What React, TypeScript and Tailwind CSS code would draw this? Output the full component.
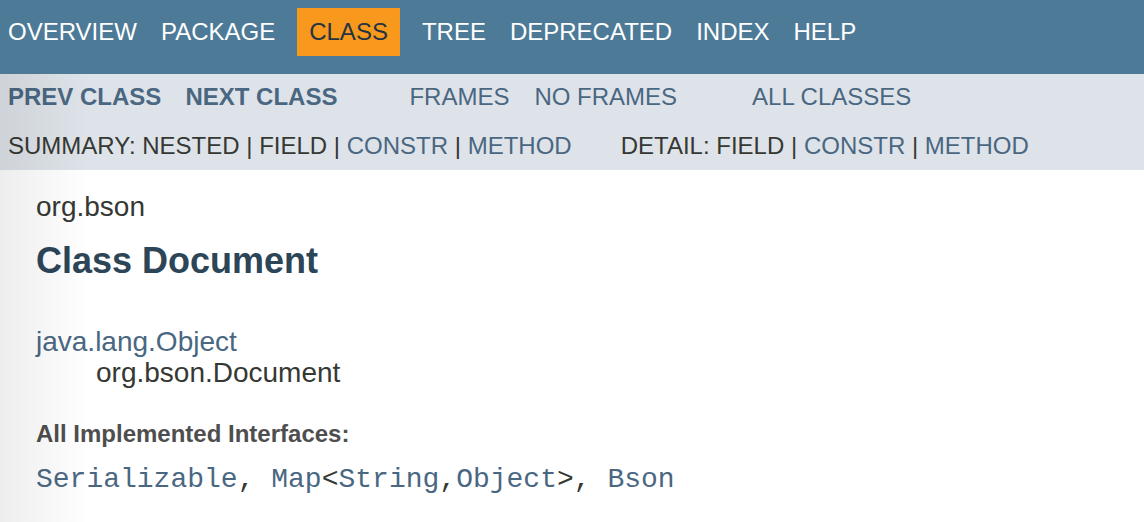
import React from "react";

const topLinks = ["OVERVIEW", "PACKAGE", "CLASS", "TREE", "DEPRECATED", "INDEX", "HELP"];

function Sep() {
  return <span className="text-[#353833]"> | </span>;
}

export default function App() {
  return (
    <div className="relative min-h-[522px] w-full bg-white font-['Liberation_Sans',Arial,sans-serif] text-[#353833]">
      {/* top nav */}
      <div className="flex h-[74px] items-start gap-[24px] bg-[#4d7a97] pl-[8px] pt-2 text-[24px] leading-[48px] text-white">
        {topLinks.map((l) =>
          l === "CLASS" ? (
            <span key={l} className="-mx-[2px] h-12 bg-[#f8981d] px-3 text-[#253441]">
              {l}
            </span>
          ) : (
            <span key={l} className="h-12">
              {l}
            </span>
          )
        )}
      </div>

      {/* sub nav */}
      <div className="bg-[#dee3e9] pb-[10px] pl-[8px] pt-[9px] text-[24px] leading-[28px]">
        <div className="flex text-[#4a6782]">
          <div className="flex gap-6 font-bold">
            <span>PREV CLASS</span>
            <span>NEXT CLASS</span>
          </div>
          <div className="ml-[72px] flex gap-[25px]">
            <span>FRAMES</span>
            <span>NO FRAMES</span>
          </div>
          <div className="ml-[75px]">ALL CLASSES</div>
        </div>
        <div className="mt-[21px] flex whitespace-pre">
          <div>
            <span>SUMMARY: NESTED</span>
            <Sep />
            <span>FIELD</span>
            <Sep />
            <span className="text-[#4a6782]">CONSTR</span>
            <Sep />
            <span className="text-[#4a6782]">METHOD</span>
          </div>
          <div className="ml-[49px]">
            <span>DETAIL: FIELD</span>
            <Sep />
            <span className="text-[#4a6782]">CONSTR</span>
            <Sep />
            <span className="text-[#4a6782]">METHOD</span>
          </div>
        </div>
      </div>

      {/* content */}
      <div className="pl-[36px] pt-[21px]">
        <div className="text-[28px] leading-[32px]">org.bson</div>
        <h2 className="mt-[18px] text-[36px] font-bold leading-[40px] text-[#2c4557]">Class Document</h2>
        <div className="mt-[45px] text-[28px] leading-[31px]">
          <div className="text-[#4a6782]">java.lang.Object</div>
          <div className="pl-[60px]">org.bson.Document</div>
        </div>
        <div className="mt-[32px] text-[24px] font-bold leading-[28px] text-[#4e4e4e]">All Implemented Interfaces:</div>
        <div className="mt-[16px] whitespace-pre font-['Liberation_Mono','Courier_New',monospace] text-[28px] leading-[32px]">
          <span className="text-[#4a6782]">Serializable</span>
          <span>, </span>
          <span className="text-[#4a6782]">Map</span>
          <span>&lt;</span>
          <span className="text-[#4a6782]">String</span>
          <span>,</span>
          <span className="text-[#4a6782]">Object</span>
          <span>&gt;, </span>
          <span className="text-[#4a6782]">Bson</span>
        </div>
      </div>

      {/* left edge shade */}
      <div className="pointer-events-none absolute bottom-0 left-0 top-[74px] w-[90px] bg-linear-to-r from-black/[0.07] to-transparent" />
    </div>
  );
}
